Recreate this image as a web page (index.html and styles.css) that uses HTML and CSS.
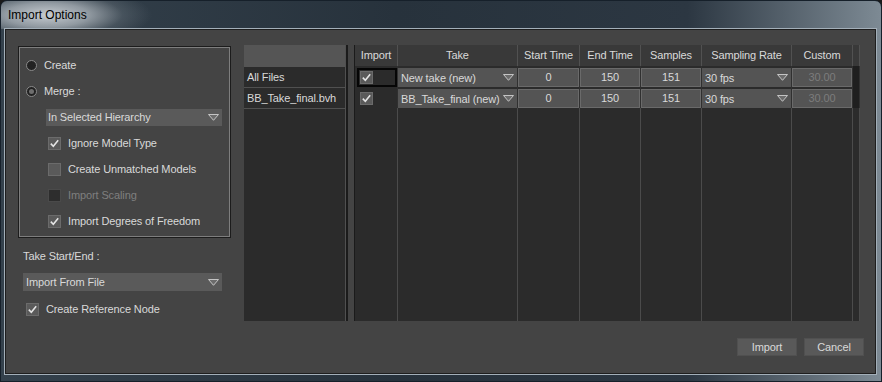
FILE: index.html
```html
<!DOCTYPE html>
<html>
<head>
<meta charset="utf-8">
<link rel="stylesheet" href="styles.css">
</head>
<body>
<div class="window">
  <div class="titlebar"><span class="title">Import Options</span></div>
  <div class="client">
    <div class="main">
      <div class="left">
        <div class="group">
          <div class="row"><span class="radio"></span><span>Create</span></div>
          <div class="row"><span class="radio on"></span><span>Merge :</span></div>
          <div class="row"><div class="dd merge-dd"><span>In Selected Hierarchy</span><svg class="arrow" width="11" height="7" viewBox="0 0 11 7"><polygon points="0.5,0.5 10.5,0.5 5.5,6.3" fill="#6c6c6c" stroke="#c4c4c4" stroke-width="1"/></svg></div></div>
          <div class="row cb-row"><span class="check"><svg width="11" height="11" viewBox="0 0 11 11"><path d="M1.8 5.6 L4.3 8.2 L9.2 2.2" fill="none" stroke="#e4e4e4" stroke-width="1.6"/></svg></span><span>Ignore Model Type</span></div>
          <div class="row cb-row"><span class="check"></span><span>Create Unmatched Models</span></div>
          <div class="row cb-row dis"><span class="check"></span><span>Import Scaling</span></div>
          <div class="row cb-row"><span class="check"><svg width="11" height="11" viewBox="0 0 11 11"><path d="M1.8 5.6 L4.3 8.2 L9.2 2.2" fill="none" stroke="#e4e4e4" stroke-width="1.6"/></svg></span><span>Import Degrees of Freedom</span></div>
        </div>
        <div class="take-label">Take Start/End :</div>
        <div class="dd take-dd"><span>Import From File</span><svg class="arrow" width="11" height="7" viewBox="0 0 11 7"><polygon points="0.5,0.5 10.5,0.5 5.5,6.3" fill="#6c6c6c" stroke="#c4c4c4" stroke-width="1"/></svg></div>
        <div class="row ref-row"><span class="check"><svg width="11" height="11" viewBox="0 0 11 11"><path d="M1.8 5.6 L4.3 8.2 L9.2 2.2" fill="none" stroke="#e4e4e4" stroke-width="1.6"/></svg></span><span>Create Reference Node</span></div>
      </div>
      <div class="files">
        <div class="files-head"></div>
        <div class="file-row">All Files</div>
        <div class="file-row">BB_Take_final.bvh</div>
      </div>
      <div class="splitter"></div>
      <div class="grid">
        <div class="h">Import</div>
        <div class="h">Take</div>
        <div class="h">Start Time</div>
        <div class="h">End Time</div>
        <div class="h">Samples</div>
        <div class="h">Sampling Rate</div>
        <div class="h">Custom</div>
        <div class="h"></div>

        <div class="c"><div class="sel"><span class="check"><svg width="11" height="11" viewBox="0 0 11 11"><path d="M1.8 5.6 L4.3 8.2 L9.2 2.2" fill="none" stroke="#e4e4e4" stroke-width="1.6"/></svg></span></div></div>
        <div class="c"><div class="dd tdd"><span>New take (new)</span><svg class="arrow" width="11" height="7" viewBox="0 0 11 7"><polygon points="0.5,0.5 10.5,0.5 5.5,6.3" fill="#6c6c6c" stroke="#c4c4c4" stroke-width="1"/></svg></div></div>
        <div class="c"><div class="bx">0</div></div>
        <div class="c"><div class="bx">150</div></div>
        <div class="c"><div class="bx">151</div></div>
        <div class="c"><div class="dd tdd"><span>30 fps</span><svg class="arrow" width="11" height="7" viewBox="0 0 11 7"><polygon points="0.5,0.5 10.5,0.5 5.5,6.3" fill="#6c6c6c" stroke="#c4c4c4" stroke-width="1"/></svg></div></div>
        <div class="c"><div class="bx dis">30.00</div></div>
        <div class="c last"></div>

        <div class="c"><div class="imp"><span class="check"><svg width="11" height="11" viewBox="0 0 11 11"><path d="M1.8 5.6 L4.3 8.2 L9.2 2.2" fill="none" stroke="#e4e4e4" stroke-width="1.6"/></svg></span></div></div>
        <div class="c"><div class="dd tdd"><span>BB_Take_final (new)</span><svg class="arrow" width="11" height="7" viewBox="0 0 11 7"><polygon points="0.5,0.5 10.5,0.5 5.5,6.3" fill="#6c6c6c" stroke="#c4c4c4" stroke-width="1"/></svg></div></div>
        <div class="c"><div class="bx">0</div></div>
        <div class="c"><div class="bx">150</div></div>
        <div class="c"><div class="bx">151</div></div>
        <div class="c"><div class="dd tdd"><span>30 fps</span><svg class="arrow" width="11" height="7" viewBox="0 0 11 7"><polygon points="0.5,0.5 10.5,0.5 5.5,6.3" fill="#6c6c6c" stroke="#c4c4c4" stroke-width="1"/></svg></div></div>
        <div class="c"><div class="bx dis">30.00</div></div>
        <div class="c last"></div>

        <div class="f"></div>
        <div class="f"></div>
        <div class="f"></div>
        <div class="f"></div>
        <div class="f"></div>
        <div class="f"></div>
        <div class="f"></div>
        <div class="f"></div>
      </div>
    </div>
    <div class="footer">
      <button class="btn">Import</button>
      <button class="btn">Cancel</button>
    </div>
  </div>
</div>
</body>
</html>
```

FILE: styles.css
```css
html, body {
  margin: 0;
  padding: 0;
  background: #1a1a1a;
}

.window {
  width: 882px;
  height: 382px;
  box-sizing: border-box;
  border: 1px solid #16202a;
  border-radius: 7px 7px 0 0;
  overflow: hidden;
  display: flex;
  flex-direction: column;
  background: linear-gradient(to right, #34414c 0%, #27323c 45%, #2c3742 78%, #7d8a94 100%);
  font-family: "Liberation Sans", Arial, sans-serif;
  font-size: 11px;
  letter-spacing: -0.12px;
  color: #d9d9d9;
}

.titlebar {
  height: 28px;
  flex: none;
  display: flex;
  align-items: center;
  padding-left: 7px;
  padding-bottom: 1px;
  box-sizing: border-box;
  background: radial-gradient(ellipse 105px 30px at 46px 14px, rgba(206,211,216,0.95) 0%, rgba(185,192,198,0.7) 40%, rgba(140,150,158,0.25) 72%, rgba(120,130,140,0) 100%);
}

.title {
  color: #000;
  font-size: 12px;
  letter-spacing: 0;
}

.client {
  margin: 0 5px 0 4px;
  height: 345px;
  flex: none;
  box-sizing: border-box;
  border: 1px solid #1e1e1e;
  box-shadow: 0 0 0 1px #a3afb9;
  background: #444444;
  display: flex;
  flex-direction: column;
  padding-top: 15px;
}

.main {
  display: flex;
  height: 276px;
  flex: none;
  padding-left: 12px;
}

.left {
  width: 213px;
  margin-right: 13px;
}

.group {
  height: 192px;
  margin-top: 1px;
  box-sizing: border-box;
  border: 1px solid #1c1c1c;
  box-shadow: inset 0 0 0 1px #7e7e7e;
  padding: 5px 0 0 7px;
}

.row {
  height: 26px;
  display: flex;
  align-items: center;
  white-space: nowrap;
}

.radio {
  width: 11px;
  height: 11px;
  box-sizing: border-box;
  border-radius: 50%;
  border: 1px solid #8a8a8a;
  background: #222;
  margin-right: 7px;
  display: grid;
  place-items: center;
}

.radio.on::after {
  content: "";
  width: 5px;
  height: 5px;
  border-radius: 50%;
  background: #6e6e6e;
}

.dd {
  display: flex;
  align-items: center;
  justify-content: space-between;
  box-sizing: border-box;
  background: #5a5a5a;
  white-space: nowrap;
  overflow: hidden;
}

.arrow {
  flex: none;
}

.merge-dd {
  width: 176px;
  height: 17px;
  margin-left: 20px;
  padding: 0 3px 0 2px;
}

.cb-row {
  padding-left: 22px;
}

.check {
  width: 13px;
  height: 13px;
  flex: none;
  box-sizing: border-box;
  border: 1px solid #6b6b6b;
  background: #5a5a5a;
  margin-right: 7px;
  display: grid;
  place-items: center;
}

.dis {
  color: #7f7f7f;
}

.row.dis .check {
  background: #2d2d2d;
  border-color: #4a4a4a;
}

.take-label {
  margin: 10px 0 0 5px;
  line-height: 16px;
}

.take-dd {
  width: 199px;
  height: 18px;
  margin: 9px 0 0 5px;
  padding: 0 3px 0 3px;
}

.ref-row {
  height: 18px;
  margin: 9px 0 0 8px;
}

.files {
  width: 102px;
  box-sizing: border-box;
  background: #2b2b2b;
  border-right: 1px solid #505050;
}

.files-head {
  height: 22px;
  background: #555555;
}

.file-row {
  height: 21px;
  box-sizing: border-box;
  border-bottom: 1px solid #505050;
  padding-left: 3px;
  line-height: 20px;
  white-space: nowrap;
}

.splitter {
  width: 8px;
  box-sizing: border-box;
  border-left: 2px solid #1b1b1b;
}

.grid {
  width: 506px;
  box-sizing: border-box;
  border-left: 1px solid #1b1b1b;
  background: #2b2b2b;
  display: grid;
  grid-template-columns: 43px 120px 62px 61px 61px 90px 61px 7px;
  grid-template-rows: 21px 21px 21px 1fr;
}

.h {
  background: #393939;
  border-right: 1px solid #515151;
  text-align: center;
  line-height: 21px;
  white-space: nowrap;
}

.c {
  border-right: 1px solid #303030;
  padding-top: 2px;
  box-sizing: border-box;
}

.c.last {
  background: #1f1f1f;
  padding-top: 0;
}

.f {
  border-right: 1px solid #4b4b4b;
}

.sel {
  margin-left: 2px;
  height: 19px;
  box-sizing: border-box;
  border: 2px solid #060606;
  padding-left: 1px;
  display: flex;
  align-items: center;
}

.imp {
  height: 19px;
  padding-left: 5px;
  display: flex;
  align-items: center;
}

.tdd {
  height: 19px;
  padding: 0 3px 0 3px;
  background: #545454;
}

.bx {
  height: 19px;
  box-sizing: border-box;
  border: 1px solid #6a6a6a;
  background: #545454;
  text-align: center;
  line-height: 17px;
}

.bx.dis {
  color: #7c7c7c;
}

.footer {
  display: flex;
  justify-content: flex-end;
  gap: 7px;
  padding-right: 11px;
  margin-top: 17px;
}

.btn {
  width: 60px;
  height: 18px;
  padding: 0;
  box-sizing: border-box;
  background: #595959;
  border: 1px solid #505050;
  color: #d9d9d9;
  font-family: "Liberation Sans", Arial, sans-serif;
  font-size: 11px;
  letter-spacing: -0.12px;
}
```
